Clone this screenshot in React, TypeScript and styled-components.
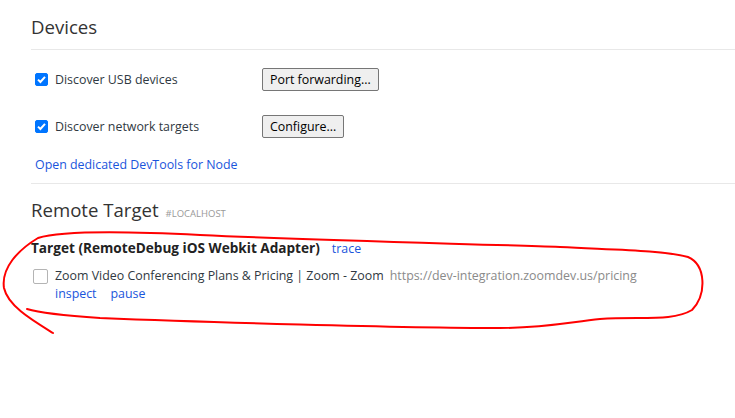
import React from 'react';
import styled, { createGlobalStyle } from 'styled-components';

const GlobalStyle = createGlobalStyle`
  html, body {
    margin: 0;
    padding: 0;
    background: #ffffff;
  }
  body {
    font-family: 'Open Sans', 'Noto Sans', Arial, sans-serif;
    font-size: 12.4px;
    color: #303942;
  }
`;

const Page = styled.div`
  position: relative;
  width: 735px;
  height: 418px;
  overflow: hidden;
  padding-left: 31px;
  box-sizing: border-box;
`;

const Section = styled.section<{ $top: number }>`
  display: flex;
  flex-direction: column;
  padding-top: ${(p) => p.$top}px;
`;

const Heading = styled.h2`
  margin: 0;
  font-weight: 400;
  font-size: 18.6px;
  line-height: 26px;
  color: #333;
  display: flex;
  align-items: baseline;
  gap: 7px;
`;

const HeadingTag = styled.span`
  font-size: 9.5px;
  color: #999;
`;

const Divider = styled.hr<{ $above?: number; $below?: number }>`
  margin: ${(p) => p.$above ?? 0}px 0 ${(p) => p.$below ?? 0}px;
  border: none;
  border-top: 1px solid #e8e8e8;
  width: 100%;
`;

const CheckRow = styled.div<{ $top?: number }>`
  display: flex;
  align-items: center;
  height: 24px;
  padding-left: 4px;
  margin-top: ${(p) => p.$top ?? 0}px;
`;

const CheckLabel = styled.label`
  display: flex;
  align-items: center;
  gap: 7px;
  width: 227px;
  color: #303942;
`;

const Box = styled.span<{ $checked?: boolean }>`
  width: 13px;
  height: 13px;
  box-sizing: border-box;
  border-radius: 2px;
  display: flex;
  align-items: center;
  justify-content: center;
  background: ${(p) => (p.$checked ? '#0075ff' : '#fff')};
  border: 1px solid ${(p) => (p.$checked ? '#0075ff' : '#a0a0a0')};
`;

const Button = styled.button`
  font-family: inherit;
  font-size: 12.4px;
  height: 23px;
  padding: 0 7px;
  background: #efefef;
  color: #000;
  border: 1px solid #767676;
  border-radius: 2px;
`;

const Link = styled.a<{ $gap?: number }>`
  color: #1a55dc;
  text-decoration: none;
  margin-left: ${(p) => p.$gap ?? 0}px;
`;

const NodeLink = styled.div`
  padding-left: 4px;
  margin-top: 18px;
  margin-bottom: 10px;
`;

const TargetTitle = styled.div`
  font-weight: 700;
  font-size: 13.6px;
  color: #222;
  display: flex;
  align-items: baseline;
  margin-top: 11px;
`;

const TraceLink = styled(Link)`
  font-weight: 400;
  font-size: 12.4px;
`;

const TargetRow = styled.div`
  display: flex;
  gap: 7px;
  margin-top: 10px;
  padding-left: 2px;
`;

const BigBox = styled(Box)`
  width: 15px;
  height: 15px;
  margin-top: 2px;
  border-color: #b4b4b4;
`;

const TargetBody = styled.div`
  display: flex;
  flex-direction: column;
  line-height: 18px;
`;

const PageTitle = styled.span`
  color: #303942;
`;

const PageUrl = styled.span`
  color: #8a8a8a;
  margin-left: 6px;
`;

// hand-drawn red loop over the target entry
const Scribble = styled.svg`
  position: absolute;
  left: 0;
  top: 0;
  pointer-events: none;
`;

const Check = () => (
  <svg width="11" height="11" viewBox="0 0 11 11">
    <path d="M2 5.6 L4.4 8 L9 2.8" fill="none" stroke="#fff" strokeWidth="2" />
  </svg>
);

const App = (): JSX.Element => (
  <>
    <GlobalStyle />
    <Page>
      {/* Devices */}
      <Section $top={14}>
        <Heading>Devices</Heading>
        <Divider $above={9} $below={17} />
        <CheckRow>
          <CheckLabel>
            <Box $checked>
              <Check />
            </Box>
            Discover USB devices
          </CheckLabel>
          <Button type="button">Port forwarding...</Button>
        </CheckRow>
        <CheckRow $top={23}>
          <CheckLabel>
            <Box $checked>
              <Check />
            </Box>
            Discover network targets
          </CheckLabel>
          <Button type="button">Configure...</Button>
        </CheckRow>
        <NodeLink>
          <Link href="#">Open dedicated DevTools for Node</Link>
        </NodeLink>
        <Divider />
      </Section>

      {/* Remote Target */}
      <Section $top={13}>
        <Heading>
          Remote Target <HeadingTag>#LOCALHOST</HeadingTag>
        </Heading>
        <TargetTitle>
          Target (RemoteDebug iOS Webkit Adapter)
          <TraceLink href="#" $gap={12}>
            trace
          </TraceLink>
        </TargetTitle>
        <TargetRow>
          <BigBox />
          <TargetBody>
            <div>
              <PageTitle>Zoom Video Conferencing Plans &amp; Pricing | Zoom - Zoom</PageTitle>
              <PageUrl>https://dev-integration.zoomdev.us/pricing</PageUrl>
            </div>
            <div>
              <Link href="#">inspect</Link>
              <Link href="#" $gap={14}>
                pause
              </Link>
            </div>
          </TargetBody>
        </TargetRow>
      </Section>

      <Scribble width="735" height="418" viewBox="0 0 735 418">
        <path
          d="M53 333 C32 320 8 306 4 288 C1 268 18 250 38 238 C60 231 120 231 200 235 C330 241 480 244 560 247 C620 250 660 250 688 257 C706 265 707 294 692 310 C672 322 640 316 600 319 C570 322 545 328 500 328 C400 328 200 322 100 318 C70 316 40 313 27 309"
          fill="none"
          stroke="#ff0000"
          strokeWidth="2"
          strokeLinecap="round"
        />
      </Scribble>
    </Page>
  </>
);

export default App;
